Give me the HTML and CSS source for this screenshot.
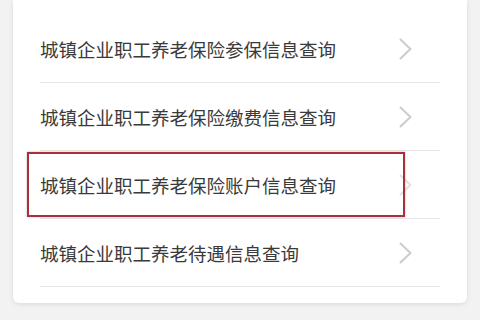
FILE: index.html
```html
<!DOCTYPE html>
<html lang="zh-CN">
<head>
<meta charset="utf-8">
<link rel="stylesheet" href="styles.css">
</head>
<body>
<div class="card">
  <ul class="list">
    <li class="row"><span class="label">城镇企业职工养老保险参保信息查询</span><svg class="chev" viewBox="0 0 13 22"><path d="M1.5 1.5 L11.5 11 L1.5 20.5" /></svg></li>
    <li class="row"><span class="label">城镇企业职工养老保险缴费信息查询</span><svg class="chev" viewBox="0 0 13 22"><path d="M1.5 1.5 L11.5 11 L1.5 20.5" /></svg></li>
    <li class="row marked"><span class="label">城镇企业职工养老保险账户信息查询</span><svg class="chev faint" viewBox="0 0 13 22"><path d="M1.5 1.5 L11.5 11 L1.5 20.5" /></svg><span class="redbox"></span></li>
    <li class="row"><span class="label">城镇企业职工养老待遇信息查询</span><svg class="chev" viewBox="0 0 13 22"><path d="M1.5 1.5 L11.5 11 L1.5 20.5" /></svg></li>
  </ul>
</div>
</body>
</html>
```
FILE: styles.css
```css
html, body {
  margin: 0;
  padding: 0;
  background: #f2f2f2;
  width: 480px;
  height: 320px;
  overflow: hidden;
}
.card {
  margin: 0 13px;
  width: 454px;
  background: #ffffff;
  border-radius: 0 0 6px 6px;
  box-shadow: 0 1px 5px rgba(0,0,0,0.10);
  padding: 15px 0 16px;
}
.list {
  list-style: none;
  margin: 0 27px;
  padding: 0;
}
.row {
  position: relative;
  height: 67px;
  border-bottom: 1px solid #e6e6e6;
  display: flex;
  align-items: center;
  justify-content: space-between;
  padding-right: 28px;
}
.label {
  font-family: "Noto Sans CJK SC", "Noto Sans", sans-serif;
  font-size: 18.5px;
  color: #3a3a3a;
  line-height: 1;
  margin-top: 2px;
}
.chev {
  width: 13px;
  height: 22px;
  flex: none;
}
.chev path {
  fill: none;
  stroke: #cccccc;
  stroke-width: 2;
  stroke-linecap: round;
  stroke-linejoin: round;
}
.chev.faint path {
  stroke: #e2e2e2;
}
.redbox {
  position: absolute;
  left: -13px;
  top: 1px;
  width: 378px;
  height: 65px;
  border: 2px solid #a8303e;
  box-sizing: border-box;
  box-shadow: 0 0 2px rgba(168,48,62,0.4);
}
```
